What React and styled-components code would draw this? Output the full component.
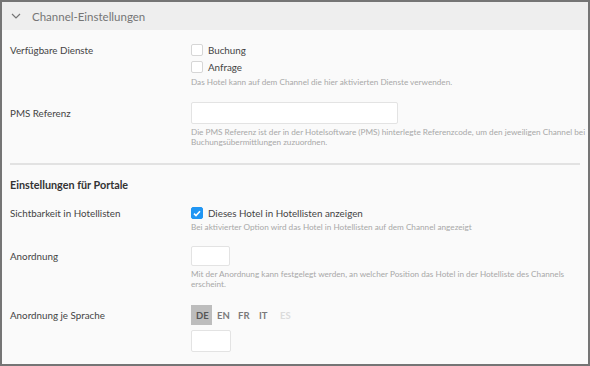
import React from 'react';
import styled, { createGlobalStyle } from 'styled-components';

const GlobalStyle = createGlobalStyle`
  html, body {
    margin: 0;
    padding: 0;
    background: #fff;
  }
  * {
    box-sizing: border-box;
  }
`;

const Frame = styled.div`
  width: 590px;
  height: 366px;
  border: 2px solid #757575;
  background: #fafafa;
  font-family: Lato, 'Liberation Sans', sans-serif;
  overflow: hidden;
`;

const Header = styled.div`
  height: 28px;
  background: #eeeeee;
  display: flex;
  align-items: center;
  padding-left: 9px;
  gap: 11px;
  color: #757575;
  font-size: 11.5px;
`;

const Body = styled.div`
  padding: 14px 8px 0 8px;
`;

const Row = styled.div`
  display: grid;
  grid-template-columns: 181px 1fr;
  margin-bottom: ${(p) => p.$gap || 0}px;
`;

const Label = styled.div`
  height: ${(p) => p.$h || 12}px;
  display: flex;
  align-items: center;
  font-size: 9.8px;
  color: #444;
`;

const Field = styled.div`
  display: flex;
  flex-direction: column;
  align-items: flex-start;
`;

const CheckRow = styled.label`
  display: flex;
  align-items: center;
  gap: 5px;
  height: 12px;
  margin-bottom: ${(p) => (p.$mb === undefined ? 5 : p.$mb)}px;
  font-size: 9.8px;
  color: #444;
`;

const Box = styled.span`
  width: 12px;
  height: 12px;
  border-radius: 2px;
  border: 1px solid ${(p) => (p.$on ? '#2196f3' : '#d6d6d6')};
  background: ${(p) => (p.$on ? '#2196f3' : '#fff')};
  display: flex;
  align-items: center;
  justify-content: center;
`;

const Help = styled.div`
  font-size: 8.2px;
  line-height: 10px;
  color: #a8a8a8;
  white-space: nowrap;
  margin-top: ${(p) => p.$top || 0}px;
`;

const Input = styled.div`
  width: ${(p) => p.$w}px;
  height: ${(p) => p.$h}px;
  background: #fff;
  border: 1px solid #e3e3e3;
  border-radius: 2px;
`;

const Divider = styled.hr`
  border: none;
  height: 2px;
  background: #e2e2e2;
  margin: 0 0 13px 0;
  width: 570px;
`;

const SectionTitle = styled.div`
  font-size: 10.8px;
  font-weight: 700;
  color: #333;
  margin-bottom: 16px;
`;

const Tabs = styled.div`
  display: flex;
  margin-bottom: 5px;
`;

const Tab = styled.span`
  width: 21px;
  height: 20px;
  padding-left: 5px;
  display: flex;
  align-items: center;
  font-size: 9.5px;
  font-weight: 700;
  background: ${(p) => (p.$active ? '#bdbdbd' : 'transparent')};
  color: ${(p) => (p.$active ? '#555' : p.$off ? '#dcdcdc' : '#7a7a7a')};
`;

const Chevron = () => (
  <svg width="10" height="6" viewBox="0 0 10 6" fill="none">
    <path d="M1 1l4 4 4-4" stroke="#757575" strokeWidth="1.2" />
  </svg>
);

const Check = () => (
  <svg width="8" height="7" viewBox="0 0 8 7" fill="none">
    <path d="M1 3.6l2 2L7 1.2" stroke="#fff" strokeWidth="1.6" />
  </svg>
);

export default function App() {
  return (
    <>
      <GlobalStyle />
      <Frame>
        <Header>
          <Chevron />
          <span>Channel-Einstellungen</span>
        </Header>
        <Body>
          <Row $gap={15}>
            <Label>Verfügbare Dienste</Label>
            <Field>
              <CheckRow>
                <Box />
                Buchung
              </CheckRow>
              <CheckRow $mb={4}>
                <Box />
                Anfrage
              </CheckRow>
              <Help>Das Hotel kann auf dem Channel die hier aktivierten Dienste verwenden.</Help>
            </Field>
          </Row>
          <Row $gap={16}>
            <Label $h={22}>PMS Referenz</Label>
            <Field>
              <Input $w={207} $h={22} />
              <Help $top={3}>
                Die PMS Referenz ist der in der Hotelsoftware (PMS) hinterlegte Referenzcode, um den jeweiligen Channel bei
                <br />
                Buchungsübermittlungen zuzuordnen.
              </Help>
            </Field>
          </Row>
          <Divider />
          <SectionTitle>Einstellungen für Portale</SectionTitle>
          <Row $gap={14}>
            <Label>Sichtbarkeit in Hotellisten</Label>
            <Field>
              <CheckRow $mb={3}>
                <Box $on>
                  <Check />
                </Box>
                Dieses Hotel in Hotellisten anzeigen
              </CheckRow>
              <Help>Bei aktivierter Option wird das Hotel in Hotellisten auf dem Channel angezeigt</Help>
            </Field>
          </Row>
          <Row $gap={16}>
            <Label $h={20}>Anordnung</Label>
            <Field>
              <Input $w={39} $h={20} />
              <Help $top={3}>
                Mit der Anordnung kann festgelegt werden, an welcher Position das Hotel in der Hotelliste des Channels
                <br />
                erscheint.
              </Help>
            </Field>
          </Row>
          <Row>
            <Label $h={20}>Anordnung je Sprache</Label>
            <Field>
              <Tabs>
                <Tab $active>DE</Tab>
                <Tab>EN</Tab>
                <Tab>FR</Tab>
                <Tab>IT</Tab>
                <Tab $off>ES</Tab>
              </Tabs>
              <Input $w={40} $h={22} />
            </Field>
          </Row>
        </Body>
      </Frame>
    </>
  );
}
